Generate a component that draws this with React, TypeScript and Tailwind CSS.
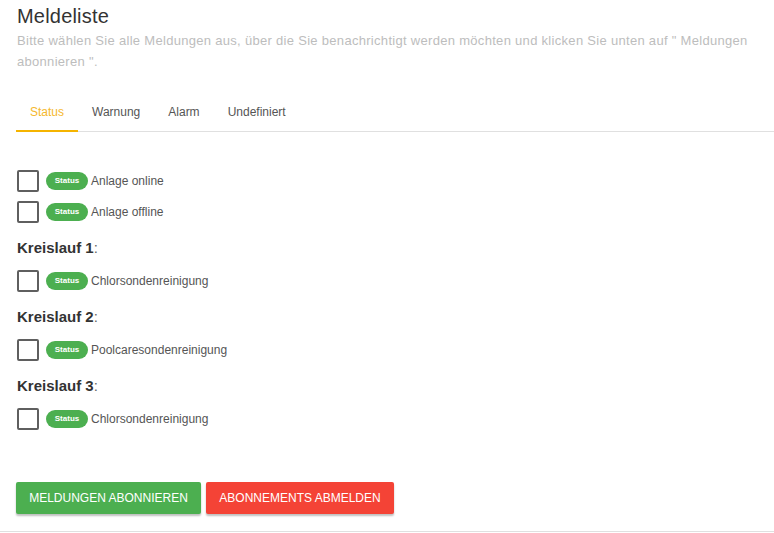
import { type FC } from 'react';

type Item = { label: string };

type Group = { title?: string; items: Item[] };

const groups: Group[] = [
  { items: [{ label: 'Anlage online' }, { label: 'Anlage offline' }] },
  { title: 'Kreislauf 1', items: [{ label: 'Chlorsondenreinigung' }] },
  { title: 'Kreislauf 2', items: [{ label: 'Poolcaresondenreinigung' }] },
  { title: 'Kreislauf 3', items: [{ label: 'Chlorsondenreinigung' }] },
];

const tabs = ['Status', 'Warnung', 'Alarm', 'Undefiniert'];

const Row: FC<{ item: Item }> = ({ item }) => (
  <label className="flex h-[31px] items-center">
    <span className="ml-px h-[22px] w-[22px] rounded-[2px] border-2 border-[#5f5f5f] bg-white" />
    <span className="ml-[7px] flex h-[18px] w-[42px] items-center justify-center rounded-full bg-[#4caf50] text-[8px] font-bold text-white">
      Status
    </span>
    <span className="ml-[3px] text-[12px] text-[#555]">{item.label}</span>
  </label>
);

export default function App() {
  return (
    <div className="min-h-[533px] w-[774px] bg-white font-['Liberation_Sans',Arial,sans-serif]">
      <div className="pl-4 pt-1">
        <h1 className="ml-px text-[20px] leading-[24px] tracking-[0.2px] text-[#333]">Meldeliste</h1>
        <p className="ml-px mt-[2px] pr-4 text-[13px] leading-[21px] tracking-[0.3px] text-[#bdbdbd]">
          Bitte wählen Sie alle Meldungen aus, über die Sie benachrichtigt werden möchten und klicken Sie unten auf " Meldungen abonnieren ".
        </p>

        <div className="mt-[20px] flex border-b border-[#e0e0e0]">
          {tabs.map((tab, i) => (
            <div
              key={tab}
              className={
                i === 0
                  ? 'mb-[-1px] border-b-2 border-[#f5b400] px-[14px] pb-[10px] pt-[12px] text-[12px] leading-[16px] text-[#f5b82e]'
                  : 'mb-[-1px] border-b-2 border-transparent px-[14px] pb-[10px] pt-[12px] text-[12px] leading-[16px] text-[#555]'
              }
            >
              {tab}
            </div>
          ))}
        </div>

        <div className="pt-[33px]">
          {groups.map((group, gi) => (
            <div key={gi}>
              {group.title ? (
                <div className="ml-px mb-[7px] mt-[11px] text-[15px] leading-[20px] text-[#333]">
                  <span className="font-bold">{group.title}</span>
                  <span className="text-[#666]">:</span>
                </div>
              ) : null}
              {group.items.map((item, ii) => (
                <Row key={ii} item={item} />
              ))}
            </div>
          ))}
        </div>

        <div className="mt-[48px] flex gap-[5px] pb-[17px]">
          <button className="h-[32px] w-[185px] rounded-[2px] bg-[#4caf50] text-[12px] uppercase text-white shadow-[0_2px_2px_rgba(0,0,0,0.25)]">
            Meldungen abonnieren
          </button>
          <button className="h-[32px] w-[188px] rounded-[2px] bg-[#f44336] text-[12px] uppercase text-white shadow-[0_2px_2px_rgba(0,0,0,0.25)]">
            Abonnements abmelden
          </button>
        </div>
      </div>
      <div className="border-t border-[#e0e0e0]" />
    </div>
  );
}
